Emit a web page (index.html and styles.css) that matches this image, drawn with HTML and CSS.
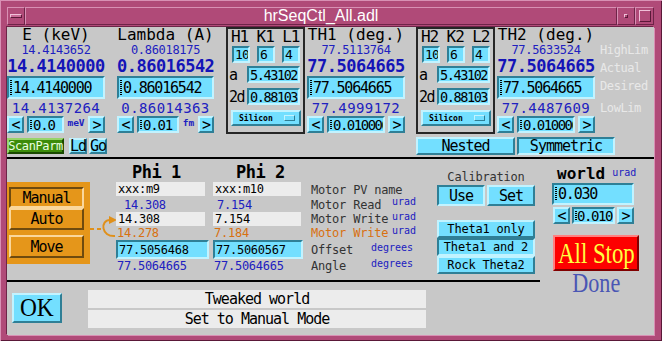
FILE: index.html
```html
<!DOCTYPE html>
<html>
<head>
<meta charset="utf-8">
<title>hrSeqCtl_All.adl</title>
<link rel="stylesheet" href="styles.css">
</head>
<body>
<div class="window">
  <div class="titlebar">
    <div class="tb-btn tb-menu"><span class="tb-bar"></span></div>
    <div class="tb-title">hrSeqCtl_All.adl</div>
    <div class="tb-btn tb-min"><span class="tb-dot"></span></div>
    <div class="tb-btn tb-max"><span class="tb-sq"></span></div>
  </div>
  <div class="content">
    <div class="top">
      <div class="col col-e">
        <div class="hdr">E (keV)</div>
        <div class="hi">14.4143652</div>
        <div class="big">14.4140000</div>
        <div class="entry main-entry cur">14.4140000</div>
        <div class="lo">14.4137264</div>
        <div class="tweak">
          <div class="btn arr">&lt;</div>
          <div class="entry tw-entry cur w37">0.0</div>
          <div class="unit w24">meV</div>
          <div class="btn arr">&gt;</div>
        </div>
        <div class="scanrow">
          <div class="btn green">ScanParm</div>
          <div class="btn ldgo ld">Ld</div>
          <div class="btn ldgo go">Go</div>
        </div>
      </div>

      <div class="col col-l">
        <div class="hdr">Lambda (A)</div>
        <div class="hi">0.86018175</div>
        <div class="big">0.86016542</div>
        <div class="entry main-entry cur">0.86016542</div>
        <div class="lo">0.86014363</div>
        <div class="tweak">
          <div class="btn arr">&lt;</div>
          <div class="entry tw-entry cur w42">0.01</div>
          <div class="unit w19">fm</div>
          <div class="btn arr a16">&gt;</div>
        </div>
      </div>

      <div class="hkl hkl1">
        <div class="hkl-h">H1 K1 L1</div>
        <div class="hkl-r1">
          <div class="entry hk">10</div>
          <div class="entry hk">6</div>
          <div class="entry hk">4</div>
        </div>
        <div class="hkl-row hkl-a">
          <div class="hkl-lbl">a</div>
          <div class="entry hkv">5.43102</div>
        </div>
        <div class="hkl-row hkl-2d">
          <div class="hkl-lbl">2d</div>
          <div class="entry hkv">0.88103</div>
        </div>
        <div class="btn silicon"><span>Silicon</span><span class="ind"></span></div>
      </div>

      <div class="col col-t1">
        <div class="hdr">TH1 (deg.)</div>
        <div class="hi">77.5113764</div>
        <div class="big">77.5064665</div>
        <div class="entry main-entry cur">77.5064665</div>
        <div class="lo">77.4999172</div>
        <div class="tweak">
          <div class="btn arr">&lt;</div>
          <div class="entry tw-entry tw-long cur w58">0.010000</div>
          <div class="btn arr gap3">&gt;</div>
        </div>
      </div>

      <div class="right-group">
        <div class="rg-row">
          <div class="hkl">
            <div class="hkl-h">H2 K2 L2</div>
            <div class="hkl-r1">
              <div class="entry hk">10</div>
              <div class="entry hk">6</div>
              <div class="entry hk">4</div>
            </div>
            <div class="hkl-row hkl-a">
              <div class="hkl-lbl">a</div>
              <div class="entry hkv">5.43102</div>
            </div>
            <div class="hkl-row hkl-2d">
              <div class="hkl-lbl">2d</div>
              <div class="entry hkv">0.88103</div>
            </div>
            <div class="btn silicon"><span>Silicon</span><span class="ind"></span></div>
          </div>
          <div class="col col-t2">
            <div class="hdr">TH2 (deg.)</div>
            <div class="hi">77.5633524</div>
            <div class="big">77.5064665</div>
            <div class="entry main-entry cur">77.5064665</div>
            <div class="lo">77.4487609</div>
            <div class="tweak">
              <div class="btn arr">&lt;</div>
              <div class="entry tw-entry tw-long cur w58">0.010000</div>
              <div class="btn arr gap3">&gt;</div>
            </div>
          </div>
          <div class="lims">
            <div class="lim lim-hi">HighLim</div>
            <div class="lim lim-act">Actual</div>
            <div class="lim lim-des">Desired</div>
            <div class="lim lim-lo">LowLim</div>
          </div>
        </div>
        <div class="modes">
          <div class="btn mode-nested">Nested</div>
          <div class="btn pressed mode-sym">Symmetric</div>
        </div>
      </div>
    </div>

    <div class="hline"></div>

    <div class="lower">
      <div class="lower-left">
        <div class="mid">
          <div class="mode-box">
            <div class="obtn obtn-in ob-manual">Manual</div>
            <div class="obtn ob-auto">Auto</div>
            <div class="obtn ob-move">Move</div>
          </div>
          <svg class="arrow" width="28" height="30" viewBox="0 0 28 30">
            <line x1="2" y1="17" x2="14" y2="17" stroke="#e0901a" stroke-width="2" stroke-dasharray="4 3"/>
            <path d="M27,24 C13,25 12,8 22,8" fill="none" stroke="#e0901a" stroke-width="2"/>
            <polygon points="21,4 29,8 21,12" fill="#e0901a"/>
          </svg>
          <div class="phigrid">
            <div class="phi-h ph1">Phi 1</div>
            <div class="phi-h ph2">Phi 2</div>
            <div></div>

            <div class="pv w89">xxx:m9</div>
            <div class="pv w88">xxx:m10</div>
            <div class="mlbl">Motor PV name</div>

            <div class="rd rd1">14.308</div>
            <div class="rd rd2">7.154</div>
            <div class="mlbl"><span class="lt w81">Motor Read</span><span class="u">urad</span></div>

            <div class="pv w89">14.308</div>
            <div class="pv w88">7.154</div>
            <div class="mlbl"><span class="lt w81">Motor Write</span><span class="u">urad</span></div>

            <div class="wr2">14.278</div>
            <div class="wr2">7.184</div>
            <div class="mlbl orange"><span class="lt w81">Motor Write</span><span class="u">urad</span></div>

            <div class="entry off w93">77.5056468</div>
            <div class="entry off w90">77.5060567</div>
            <div class="mlbl"><span class="lt w60">Offset</span><span class="u u-off">degrees</span></div>

            <div class="ang">77.5064665</div>
            <div class="ang">77.5064665</div>
            <div class="mlbl"><span class="lt w60">Angle</span><span class="u u-ang">degrees</span></div>
          </div>
          <div class="calib">
            <div class="cal-lbl">Calibration</div>
            <div class="cal-row">
              <div class="btn pressed cal-btn">Use</div>
              <div class="btn cal-btn">Set</div>
            </div>
            <div class="theta">
              <div class="btn th-btn">Theta1 only</div>
              <div class="btn pressed th-btn">Theta1 and 2</div>
              <div class="btn th-btn">Rock Theta2</div>
            </div>
          </div>
        </div>
        <div class="hline"></div>
        <div class="bottom">
          <div class="btn ok"><span class="serif-sq ok-t">OK</span></div>
          <div class="msgs">
            <div class="msg">Tweaked world</div>
            <div class="msg">Set to Manual Mode</div>
          </div>
        </div>
      </div>

      <div class="world">
        <div class="w-hdr"><span class="w-title">world</span><span class="w-unit">urad</span></div>
        <div class="entry w-entry cur">0.030</div>
        <div class="tweak w-tweak">
          <div class="btn arr">&lt;</div>
          <div class="entry tw-entry w-tw-entry cur w43">0.010</div>
          <div class="btn arr gap2">&gt;</div>
        </div>
        <div class="allstop"><span class="serif-sq as-t">All Stop</span></div>
        <div class="done"><span class="serif-sq done-t">Done</span></div>
      </div>
    </div>
  </div>
</div>
</body>
</html>
```

FILE: styles.css
```css
* { box-sizing: border-box; margin: 0; padding: 0; }
html, body { width: 662px; height: 341px; overflow: hidden; }
body {
  margin: 0;
  background: #b04a78;
  font-family: "DejaVu Sans Mono", monospace;
  color: #000;
}

/* ---------- window frame ---------- */
.window {
  width: 662px;
  height: 341px;
  background: #b04a78;
  padding: 0 8px 6px 7px;
  display: flex;
  flex-direction: column;
  box-shadow: inset 1px 1px 0 #d890b4, inset -1px -1px 0 #5a1838;
}
.titlebar { height: 27px; padding: 7px 0 2px; display: flex; }
.tb-btn {
  width: 18px;
  border: 1px solid;
  border-color: #d890b4 #6e2448 #6e2448 #d890b4;
  display: flex;
  align-items: center;
  justify-content: center;
}
.tb-max { width: 19px; }
.tb-title {
  flex: 1;
  border: 1px solid;
  border-color: #d890b4 #6e2448 #6e2448 #d890b4;
  color: #ffffff;
  font-family: "Liberation Sans", Arial, sans-serif;
  font-size: 16px;
  display: flex;
  align-items: center;
  justify-content: center;
}
.tb-bar {
  width: 12px; height: 4px;
  background: #c86a96;
  border: 1px solid;
  border-color: #f0c0d8 #5a1838 #5a1838 #f0c0d8;
}
.tb-dot {
  width: 4px; height: 4px;
  border: 1px solid;
  border-color: #f0c0d8 #5a1838 #5a1838 #f0c0d8;
}
.tb-sq {
  width: 12px; height: 12px;
  border: 1px solid;
  border-color: #f0c0d8 #5a1838 #5a1838 #f0c0d8;
}

.content {
  flex: 1;
  background: #c8c8c8;
  display: flex;
  flex-direction: column;
  box-shadow: -1px -1px 0 #6e2448, 1px 1px 0 #d890b4;
}

/* ---------- shared widgets ---------- */
.entry {
  background: #73dfff;
  border: 2px solid;
  border-color: #2f7f96 #c2f3ff #c2f3ff #2f7f96;
  font-size: 15px;
  letter-spacing: -1.2px;
  padding-left: 4px;
  display: flex;
  align-items: center;
  white-space: nowrap;
  overflow: hidden;
  position: relative;
}
.cur::before {
  content: "";
  position: absolute;
  left: 1px;
  top: 2px;
  bottom: 2px;
  width: 2px;
  background: repeating-linear-gradient(#000 0 1px, transparent 1px 2px);
}
.btn {
  background: #73dfff;
  border: 2px solid;
  border-color: #c2f3ff #2f7f96 #2f7f96 #c2f3ff;
  display: flex;
  align-items: center;
  justify-content: center;
  font-size: 15px;
  letter-spacing: -1px;
  white-space: nowrap;
}
.btn.pressed { border-color: #2f7f96 #c2f3ff #c2f3ff #2f7f96; }
.hline { height: 2px; background: #000; flex: none; }

/* ---------- top section ---------- */
.top { height: 130px; display: flex; align-items: flex-start; }
.col { display: flex; flex-direction: column; width: 98px; flex: none; }
.col-l { margin-left: 12px; width: 97px; }
.col-t1 { margin-left: 2px; }
.col-t2 { margin-left: 2px; }

.hdr {
  height: 15px; line-height: 15px;
  font-size: 16px;
  text-align: center;
  white-space: nowrap;
}
.hi {
  margin-top: 1px;
  height: 15px; line-height: 15px;
  font-size: 12px; letter-spacing: -0.3px;
  color: #2020c0;
  text-align: center;
}
.big {
  height: 17px; line-height: 17px;
  font-size: 17px; font-weight: bold; letter-spacing: -0.5px;
  color: #1414b8;
  text-align: center;
  white-space: nowrap;
}
.main-entry { margin-top: 1px; height: 23px; }
.lo {
  margin-top: 1px;
  height: 16px; line-height: 16px;
  font-size: 14px; letter-spacing: 0.4px;
  color: #2020c0;
  text-align: center;
  white-space: nowrap;
}
.tweak { height: 17px; display: flex; }
.arr { width: 17px; flex: none; }
.a16 { width: 16px; }
.tw-entry { margin-left: 3px; flex: none; padding-left: 4px; font-size: 14px; }
.tw-long { letter-spacing: -1.5px; }
.w37 { width: 37px; }
.w42 { width: 42px; }
.w43 { width: 43px; }
.w58 { width: 58px; }
.gap3 { margin-left: 3px; }
.gap2 { margin-left: 2px; }
.unit {
  font-size: 9.5px;
  font-weight: bold;
  line-height: 10px;
  margin-top: 2px;
  color: #2020c0;
  text-align: center;
  flex: none;
}
.w24 { width: 24px; }
.w19 { width: 19px; }

.scanrow { margin-top: 5px; height: 16px; display: flex; }
.green {
  width: 57px; flex: none;
  background: #3c8c0a;
  border-color: #96d46a #1a4a00 #1a4a00 #96d46a;
  color: #eaffe0;
  font-size: 12px;
  letter-spacing: -0.4px;
  overflow: visible;
}
.ldgo { width: 18px; flex: none; }
.ld { margin-left: 5px; }
.go { margin-left: 2px; }

/* h k l boxes */
.hkl {
  width: 79px; height: 107px; flex: none;
  border: 2px solid #262626;
  display: flex; flex-direction: column;
}
.hkl1 { margin-left: 12px; }
.hkl-h {
  height: 15px; line-height: 15px;
  font-size: 16px; letter-spacing: -1.1px;
  padding-left: 3px;
  white-space: nowrap;
}
.hkl-r1 { margin-top: 2px; height: 17px; display: flex; gap: 7px; padding-left: 4px; }
.hk { width: 18px; padding-left: 1px; font-size: 13px; letter-spacing: -0.8px; }
.hkl-row { height: 17px; display: flex; }
.hkl-a { margin-top: 3px; }
.hkl-2d { margin-top: 5px; }
.hkl-lbl {
  width: 19px; padding-left: 1px;
  font-size: 15px; letter-spacing: -1.5px;
  display: flex; align-items: center;
}
.hkv { width: 53px; padding-left: 1px; font-size: 13.5px; letter-spacing: -1.4px; }
.silicon {
  margin: 5px 0 0 3px;
  width: 70px; height: 16px;
  justify-content: space-between;
  padding: 0 4px 0 6px;
  font-size: 8px; font-weight: bold; letter-spacing: 0;
}
.ind {
  width: 11px; height: 6px;
  border: 1px solid;
  border-color: #c2f3ff #2f7f96 #2f7f96 #c2f3ff;
}

.right-group { margin-left: 11px; display: flex; flex-direction: column; }
.rg-row { display: flex; }
.lims { margin-left: 5px; width: 47px; display: flex; flex-direction: column; }
.lim {
  font-size: 12px; letter-spacing: -0.4px;
  color: #e8e8e8;
  white-space: nowrap;
  line-height: 16px; height: 16px;
}
.lim-hi { margin-top: 15px; }
.lim-act { margin-top: 2px; }
.lim-des { margin-top: 2px; }
.lim-lo { margin-top: 6px; }
.modes { margin-top: 3px; height: 18px; display: flex; gap: 2px; }
.mode-nested { width: 99px; }
.mode-sym { width: 98px; }

/* ---------- lower section ---------- */
.lower { flex: 1; display: flex; }
.lower-left { width: 533px; flex: none; display: flex; flex-direction: column; }
.mid { height: 121px; display: flex; align-items: flex-start; }

.mode-box {
  margin-top: 23px;
  width: 83px; height: 82px; flex: none;
  background: #e5961a;
  padding: 5px 0 0 2px;
  display: flex; flex-direction: column;
}
.obtn {
  width: 75px;
  background: #e5961a;
  border: 2px solid;
  border-color: #fad79c #6e4a0e #6e4a0e #fad79c;
  display: flex; align-items: center; justify-content: center;
  font-size: 15px; letter-spacing: -1px;
}
.obtn-in { border-color: #6e4a0e #fad79c #fad79c #6e4a0e; }
.ob-manual { height: 21px; }
.ob-auto { height: 22px; }
.ob-move { height: 23px; margin-top: 5px; }

.arrow { margin-top: 53px; margin-left: -2px; flex: none; overflow: visible; }

.phigrid {
  margin-top: 4px;
  display: grid;
  grid-template-columns: 97px 98px 104px;
  grid-template-rows: 19px 15px 15px 14px 14px 19px 14px;
  flex: none;
}
.phi-h {
  font-size: 17px; font-weight: bold; letter-spacing: -0.5px;
  line-height: 19px;
  white-space: nowrap;
}
.ph1 { padding-left: 16px; }
.ph2 { padding-left: 23px; }
.pv {
  height: 14px; align-self: start;
  background: #ececec;
  font-size: 12px; letter-spacing: -0.25px; line-height: 14px;
  padding-left: 2px;
  white-space: nowrap;
}
.w89 { width: 89px; }
.w88 { width: 88px; }
.rd, .wr2, .ang {
  font-size: 12px; letter-spacing: -0.25px;
  display: flex; align-items: center;
  white-space: nowrap;
}
.rd { color: #2020c0; }
.rd1 { padding-left: 8px; }
.rd2 { padding-left: 4px; }
.wr2 { color: #d87010; padding-left: 1px; }
.ang { color: #2020c0; padding-left: 1px; }
.off { font-size: 12px; letter-spacing: -0.25px; padding-left: 1px; }
.w93 { width: 93px; }
.w90 { width: 90px; }
.mlbl {
  display: flex; align-items: center;
  font-size: 12px; letter-spacing: -0.2px;
  color: #333333;
  white-space: nowrap;
}
.mlbl.orange { color: #d87010; }
.lt { flex: none; }
.w81 { width: 81px; }
.w60 { width: 60px; }
.u {
  align-self: flex-start;
  margin-top: 0;
  font-size: 10px; line-height: 10px; letter-spacing: 0;
  color: #2020c0;
}
.u-off { margin-top: 3px; }
.u-ang { margin-top: 0; }

.calib { margin-left: 22px; width: 98px; flex: none; display: flex; flex-direction: column; }
.cal-lbl {
  margin-top: 11px;
  height: 15px; line-height: 15px;
  font-size: 12px; letter-spacing: -0.2px;
  color: #333333;
  text-align: center;
}
.cal-row { height: 21px; display: flex; gap: 2px; }
.cal-btn { width: 48px; }
.theta { margin-top: 14px; display: flex; flex-direction: column; }
.th-btn { height: 18px; font-size: 12px; letter-spacing: -0.2px; }

.bottom { flex: 1; display: flex; align-items: flex-start; }
.ok { margin: 11px 0 0 5px; width: 50px; height: 30px; flex: none; }
.msgs { margin: 8px 0 0 26px; width: 338px; display: flex; flex-direction: column; gap: 2px; }
.msg {
  height: 18px;
  background: #ececec;
  font-size: 15px; letter-spacing: -1px;
  line-height: 18px;
  text-align: center;
  white-space: nowrap;
}

.serif-sq {
  display: inline-block;
  font-family: "Liberation Serif", "Times New Roman", serif;
  letter-spacing: 0;
  white-space: nowrap;
}
.ok-t { font-size: 26px; transform: scaleX(0.9); }

.world { margin-left: 12px; width: 87px; flex: none; display: flex; flex-direction: column; }
.w-hdr { margin-top: 6px; height: 18px; display: flex; }
.w-title {
  padding-left: 5px;
  font-size: 16px; font-weight: bold;
  line-height: 18px;
}
.w-unit {
  margin-left: 7px; margin-top: 2px;
  font-size: 10px; line-height: 12px;
  color: #2020c0;
}
.w-entry { width: 82px; height: 22px; }
.w-tweak { margin: 2px 0 0 1px; }
.w-tweak .tw-entry { margin-left: 2px; }
.w-tw-entry { padding-left: 3px; letter-spacing: -1.4px; }
.allstop {
  margin: 11px 0 0 1px;
  width: 86px; height: 36px;
  background: #fd0000;
  border: 2px solid;
  border-color: #ff8080 #800000 #800000 #ff8080;
  display: flex; align-items: center; justify-content: center;
  color: #ffff40;
}
.as-t { font-size: 30px; line-height: 30px; transform: scaleX(0.76); }
.done {
  margin-left: 1px;
  width: 86px; height: 24px;
  display: flex; align-items: center; justify-content: center;
  color: #4a56b4;
}
.done-t { font-size: 27px; line-height: 24px; transform: scaleX(0.82); }
```
